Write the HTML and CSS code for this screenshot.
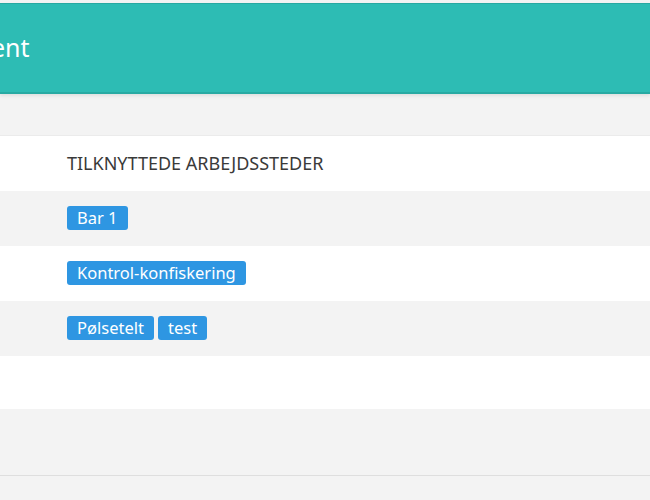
FILE: index.html
```html
<!DOCTYPE html>
<html lang="da">
<head>
    <meta charset="UTF-8">
    <meta name="viewport" content="width=device-width, initial-scale=1.0">
    <title>Arbejdssteder</title>
    <link rel="stylesheet" href="styles.css">
</head>
<body>
    <div class="page">
        <header class="top-bar">
            <h1 class="page-title">ent</h1>
        </header>

        <div class="content">
            <table class="list-table">
                <thead>
                    <tr>
                        <th class="col-first"></th>
                        <th>TILKNYTTEDE ARBEJDSSTEDER</th>
                    </tr>
                </thead>
                <tbody>
                    <tr>
                        <td class="col-first"></td>
                        <td><span class="tag">Bar 1</span></td>
                    </tr>
                    <tr>
                        <td class="col-first"></td>
                        <td><span class="tag">Kontrol-konfiskering</span></td>
                    </tr>
                    <tr>
                        <td class="col-first"></td>
                        <td><span class="tag">Pølsetelt</span> <span class="tag">test</span></td>
                    </tr>
                    <tr class="row-empty">
                        <td class="col-first"></td>
                        <td></td>
                    </tr>
                </tbody>
            </table>
            <div class="table-footer"></div>
        </div>
    </div>
</body>
</html>
```

FILE: styles.css
```css
/* Arbejdssteder */
* {
    margin: 0;
    padding: 0;
    box-sizing: border-box;
}

body {
    font-family: 'Noto Sans', 'Open Sans', sans-serif;
    background: #f3f3f3;
    color: #333;
    overflow: hidden;
}

.page {
    padding-top: 3px;
}

.top-bar {
    height: 91px;
    background: #2dbcb4;
    border-top: 1px solid #27a9a2;
    border-bottom: 2px solid #28aaa3;
    box-shadow: 0 2px 3px rgba(0, 0, 0, 0.08);
    display: flex;
    align-items: center;
}

.page-title {
    color: #fff;
    font-size: 25px;
    font-weight: 400;
    margin-left: -9px;
    margin-top: -2px;
}

.content {
    padding-top: 41px;
}

.list-table {
    width: 100%;
    border-collapse: collapse;
}

.list-table th,
.list-table td {
    height: 55px;
    text-align: left;
    vertical-align: middle;
    font-size: 16px;
    font-weight: 400;
    padding: 0;
}

.list-table th {
    font-size: 18px;
    color: #3a3a3a;
}

.list-table thead tr {
    background: #fff;
    border-top: 1px solid #ebebeb;
}

.list-table tbody tr:nth-child(odd) {
    background: #f3f3f3;
}

.list-table tbody tr:nth-child(even) {
    background: #fff;
}

.list-table .row-empty td {
    height: 53px;
}

.col-first {
    width: 67px;
}

.tag {
    display: inline-block;
    background: #2e96e2;
    color: #fff;
    font-size: 16.5px;
    line-height: 24px;
    padding: 0 10px;
    border-radius: 3px;
}

.table-footer {
    height: 67px;
    background: #f3f3f3;
    border-bottom: 1px solid #dedede;
    box-shadow: 0 2px 2px rgba(0, 0, 0, 0.06);
}
```
